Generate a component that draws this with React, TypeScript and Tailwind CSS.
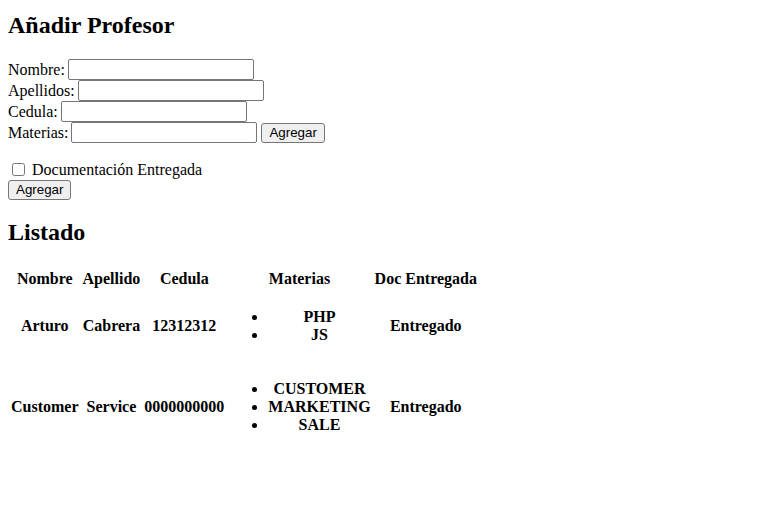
import React from "react";

type Profesor = {
  nombre: string;
  apellido: string;
  cedula: string;
  materias: string[];
  doc: string;
};

const profesores: Profesor[] = [
  { nombre: "Arturo", apellido: "Cabrera", cedula: "12312312", materias: ["PHP", "JS"], doc: "Entregado" },
  {
    nombre: "Customer",
    apellido: "Service",
    cedula: "0000000000",
    materias: ["CUSTOMER", "MARKETING", "SALE"],
    doc: "Entregado",
  },
];

const inputCls =
  "w-[186px] h-[21px] border border-[#767676] rounded-[2px] bg-white px-[2px] py-[1px] text-[13.33px] font-['Liberation_Sans',sans-serif] ml-[3px]";
const btnCls =
  "h-[20px] bg-[#efefef] border border-[#767676] rounded-[3px] px-[7px] text-[13.33px] leading-none font-['Liberation_Sans',sans-serif] text-black";

function Field({ label }: { label: string }) {
  return (
    <div className="flex items-center h-[21px]">
      <label className="leading-[21px]">{label}</label>
      <input type="text" className={inputCls} />
    </div>
  );
}

export default function App() {
  return (
    <div className="p-2 font-['Liberation_Serif',serif] text-base text-black bg-white min-h-[532px]">
      <h1 className="text-2xl font-bold leading-[28px] mt-[3px]">Añadir Profesor</h1>

      <form className="mt-[20px]" onSubmit={(e) => e.preventDefault()}>
        <Field label="Nombre:" />
        <Field label="Apellidos:" />
        <Field label="Cedula:" />
        <div className="flex items-center h-[21px]">
          <label className="leading-[21px]">Materias:</label>
          <input type="text" className={inputCls} />
          <button type="button" className={btnCls + " ml-[4px]"}>
            Agregar
          </button>
        </div>

        <div className="flex items-center h-[21px] mt-[16px]">
          <input type="checkbox" className="w-[13px] h-[13px] mt-[3px] mr-[3px] mb-[3px] ml-[4px]" />
          <span className="ml-[4px] leading-[21px]">Documentación Entregada</span>
        </div>
        <button type="submit" className={btnCls + " block"}>
          Agregar
        </button>
      </form>

      <h2 className="text-2xl font-bold leading-[28px] mt-[18px]">Listado</h2>

      <table className="mt-[21px] border-separate border-spacing-[2px] font-bold text-center leading-[18px]">
        <thead>
          <tr>
            <th className="p-[1px]">Nombre</th>
            <th className="p-[1px]">Apellido</th>
            <th className="p-[1px]">Cedula</th>
            <th className="p-[1px]">Materias</th>
            <th className="p-[1px]">Doc Entregada</th>
          </tr>
        </thead>
        <tbody>
          {profesores.map((p) => (
            <tr key={p.cedula}>
              <td className="p-[1px] align-middle">{p.nombre}</td>
              <td className="p-[1px] align-middle">{p.apellido}</td>
              <td className="p-[1px] align-middle">{p.cedula}</td>
              <td className="p-[1px] align-middle">
                <ul className="list-disc list-outside pl-10 my-4">
                  {p.materias.map((m) => (
                    <li key={m}>{m}</li>
                  ))}
                </ul>
              </td>
              <td className="p-[1px] align-middle">{p.doc}</td>
            </tr>
          ))}
        </tbody>
      </table>
    </div>
  );
}
